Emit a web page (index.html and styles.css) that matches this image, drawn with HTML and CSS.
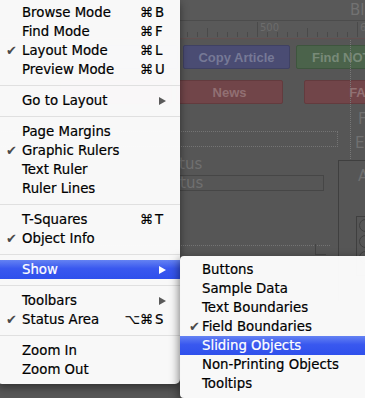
FILE: index.html
```html
<!DOCTYPE html>
<html>
<head>
<meta charset="utf-8">
<link rel="stylesheet" href="styles.css">
</head>
<body>
<div class="window">
  <div class="titlebar"><span class="title">Blog</span></div>
  <div class="ruler">
    <svg width="365" height="18" viewBox="0 0 365 18">
      <defs>
        <pattern id="tick" x="7" y="0" width="10" height="18" patternUnits="userSpaceOnUse">
          <rect x="0" y="11" width="1" height="5" fill="#4a4a4a"/>
        </pattern>
      </defs>
      <rect x="0" y="0" width="365" height="18" fill="url(#tick)"/>
      <rect x="207" y="7" width="1" height="9" fill="#4a4a4a"/>
      <rect x="307" y="7" width="1" height="9" fill="#4a4a4a"/>
      <rect x="107" y="7" width="1" height="9" fill="#4a4a4a"/>
      <rect x="157" y="1" width="1" height="15" fill="#4a4a4a"/>
      <rect x="257" y="1" width="1" height="15" fill="#4a4a4a"/>
      <rect x="357" y="1" width="1" height="15" fill="#4a4a4a"/>
      <text x="260" y="10" class="rlabel">500</text>
      <text x="360" y="10" class="rlabel">600</text>
    </svg>
  </div>
  <div class="layout">
    <div class="btn blue ghost-blue"></div>
    <div class="btn red ghost-red"></div>
    <div class="btn blue copy">Copy Article</div>
    <div class="btn green find">Find NOT Sent</div>
    <div class="btn red news">News</div>
    <div class="btn red faq">FAQ</div>
    <div class="vdots"></div>
    <div class="biglabel lab-f">F</div>
    <div class="biglabel lab-e">E</div>
    <div class="dotbox"></div>
    <div class="biglabel lab-status">tus</div>
    <div class="field"><span>tus</span></div>
    <div class="panel"><span class="biglabel">A</span></div>
    <div class="radios"><i></i><i></i><i></i></div>
    <div class="hdots"></div>
    <div class="handle"></div>
  </div>
</div>

<div class="menu main">
  <div class="item"><span class="check"></span><span class="label">Browse Mode</span><span class="key"><span class="mods">⌘</span><span class="k">B</span></span></div>
  <div class="item"><span class="check"></span><span class="label">Find Mode</span><span class="key"><span class="mods">⌘</span><span class="k">F</span></span></div>
  <div class="item"><span class="check">✔</span><span class="label">Layout Mode</span><span class="key"><span class="mods">⌘</span><span class="k">L</span></span></div>
  <div class="item"><span class="check"></span><span class="label">Preview Mode</span><span class="key"><span class="mods">⌘</span><span class="k">U</span></span></div>
  <div class="sep"></div>
  <div class="item"><span class="check"></span><span class="label">Go to Layout</span><span class="arrow"></span></div>
  <div class="sep"></div>
  <div class="item"><span class="check"></span><span class="label">Page Margins</span></div>
  <div class="item"><span class="check">✔</span><span class="label">Graphic Rulers</span></div>
  <div class="item"><span class="check"></span><span class="label">Text Ruler</span></div>
  <div class="item"><span class="check"></span><span class="label">Ruler Lines</span></div>
  <div class="sep"></div>
  <div class="item"><span class="check"></span><span class="label">T-Squares</span><span class="key"><span class="mods">⌘</span><span class="k">T</span></span></div>
  <div class="item"><span class="check">✔</span><span class="label">Object Info</span></div>
  <div class="sep"></div>
  <div class="item active"><span class="check"></span><span class="label">Show</span><span class="arrow"></span></div>
  <div class="sep"></div>
  <div class="item"><span class="check"></span><span class="label">Toolbars</span><span class="arrow"></span></div>
  <div class="item"><span class="check">✔</span><span class="label">Status Area</span><span class="key"><span class="mods">⌥⌘</span><span class="k">S</span></span></div>
  <div class="sep"></div>
  <div class="item"><span class="check"></span><span class="label">Zoom In</span></div>
  <div class="item"><span class="check"></span><span class="label">Zoom Out</span></div>
</div>

<div class="menu sub">
  <div class="item"><span class="check"></span><span class="label">Buttons</span></div>
  <div class="item"><span class="check"></span><span class="label">Sample Data</span></div>
  <div class="item"><span class="check"></span><span class="label">Text Boundaries</span></div>
  <div class="item"><span class="check">✔</span><span class="label">Field Boundaries</span></div>
  <div class="item active"><span class="check"></span><span class="label">Sliding Objects</span></div>
  <div class="item"><span class="check"></span><span class="label">Non-Printing Objects</span></div>
  <div class="item"><span class="check"></span><span class="label">Tooltips</span></div>
</div>
</body>
</html>
```

FILE: styles.css
```css
html, body {
  margin: 0;
  padding: 0;
}
body {
  width: 365px;
  height: 398px;
  overflow: hidden;
  position: relative;
  background: #565656;
  font-family: "DejaVu Sans", sans-serif;
}

/* ---------- background window ---------- */
.window {
  display: flex;
  flex-direction: column;
  height: 398px;
}
.titlebar {
  height: 20px;
  background: #595959;
  border-bottom: 1px solid #4c4c4c;
  display: flex;
  align-items: center;
  padding-left: 350px;
  overflow: hidden;
  white-space: nowrap;
}
.title {
  font-size: 15px;
  color: #727272;
  font-family: "DejaVu Sans", sans-serif;
}
.ruler {
  height: 17px;
  background: #595959;
  border-bottom: 1px solid #635050;
  overflow: hidden;
}
.ruler svg { display: block; }
.rlabel {
  font-family: "DejaVu Sans", sans-serif;
  font-size: 10px;
  fill: #6c6c6c;
}
.layout {
  position: relative;
  flex: 1;
  overflow: hidden;
}
.btn {
  position: absolute;
  height: 22px;
  border: 1px solid #444;
  border-radius: 2px;
  display: flex;
  align-items: center;
  justify-content: center;
  font-family: "Liberation Sans", Arial, sans-serif;
  font-weight: bold;
  font-size: 13px;
  white-space: nowrap;
  overflow: hidden;
}
.blue { background: #4a4c73; border-color: #3f4163; color: #767996; }
.green { background: #4b634b; border-color: #3e553e; color: #788a78; }
.red { background: #714549; border-color: #633b3e; color: #917073; }
.ghost-blue { left: 70px; top: 6px; width: 106px; }
.ghost-red { left: 60px; top: 41px; width: 110px; }
.copy { left: 183px; top: 6px; width: 105px; }
.find { left: 296px; top: 6px; width: 110px; justify-content: flex-start; padding-left: 15px; }
.news { left: 176px; top: 41px; width: 105px; }
.faq { left: 304px; top: 41px; width: 115px; }
.vdots {
  position: absolute;
  left: 350px;
  top: 1px;
  height: 121px;
  border-left: 1px dotted #777;
}
.biglabel {
  position: absolute;
  font-size: 15px;
  color: #707070;
  line-height: 16px;
}
.lab-f { left: 358px; top: 72px; }
.lab-e { left: 355px; top: 96px; }
.dotbox {
  position: absolute;
  left: -10px;
  top: 92px;
  width: 346px;
  height: 14px;
  border: 1px dotted #747474;
}
.lab-status { left: 179px; top: 118px; line-height: 14px; }
.field {
  position: absolute;
  left: 100px;
  top: 136px;
  width: 222px;
  height: 14px;
  border: 1px solid #464646;
  font-size: 15px;
  color: #707070;
  line-height: 14px;
  overflow: hidden;
}
.field span { position: relative; left: 79px; }
.panel {
  position: absolute;
  left: 338px;
  top: 121px;
  width: 40px;
  height: 140px;
  border-left: 1px solid #3f3f3f;
  border-top: 1px solid #3f3f3f;
}
.panel .biglabel { left: 19px; top: 7px; }
.radios {
  position: absolute;
  left: 356px;
  top: 177px;
  width: 20px;
  height: 60px;
  border: 1px solid #3f3f3f;
  display: flex;
  flex-direction: column;
  gap: 3px;
  padding: 2px 0 0 2px;
  box-sizing: border-box;
}
.radios i {
  display: block;
  width: 11px;
  height: 11px;
  border: 1px solid #3f3f3f;
  border-radius: 50%;
}
.hdots {
  position: absolute;
  left: 0;
  top: 206px;
  width: 330px;
  border-top: 1px dotted #747474;
}
.handle {
  position: absolute;
  left: 315px;
  top: 205px;
  width: 10px;
  height: 10px;
  border-left: 1px solid #444;
  border-bottom: 1px solid #444;
}

/* ---------- menus ---------- */
.menu {
  position: absolute;
  background: rgba(255, 255, 255, 0.96);
  font-family: "DejaVu Sans", sans-serif;
  font-size: 13.3px;
  color: #000;
  -webkit-text-stroke: 0.2px #000;
  box-sizing: border-box;
}
.main {
  left: -3px;
  top: 0;
  width: 183px;
  padding: 3px 0 5px;
  border-radius: 0 0 5px 5px;
  box-shadow: 0 3px 9px rgba(0, 0, 0, 0.45);
}
.sub {
  left: 180px;
  top: 256px;
  width: 192px;
  padding: 4px 0 5px;
  border-radius: 4px;
  box-shadow: -1px 3px 10px rgba(0, 0, 0, 0.5);
}
.item {
  height: 19px;
  display: flex;
  align-items: center;
  white-space: nowrap;
}
.main .item { padding-left: 9px; padding-right: 13px; }
.sub .item { padding-left: 9px; }
.check {
  width: 16px;
  flex: none;
  font-size: 13px;
  color: #4a4a4a;
  -webkit-text-stroke: 0;
  line-height: 19px;
}
.sub .check { width: 13px; }
.label { flex: 1; }
.key {
  display: flex;
  flex: none;
}
.mods { text-align: right; }
.k { width: 12px; padding-left: 2px; }
.arrow {
  flex: none;
  width: 0;
  height: 0;
  margin-right: 1px;
  border-left: 7px solid #5a5a5a;
  border-top: 4.5px solid transparent;
  border-bottom: 4.5px solid transparent;
}
.item.active {
  background: linear-gradient(#6482f3, #3958ef 45%, #2f50ec);
  color: #fff;
  -webkit-text-stroke-color: #fff;
}
.item.active .arrow { border-left-color: #fff; }
.sep {
  height: 12px;
  display: flex;
  align-items: center;
}
.sep::before {
  content: "";
  display: block;
  width: 100%;
  height: 1px;
  background: #e0e0e0;
}
```
